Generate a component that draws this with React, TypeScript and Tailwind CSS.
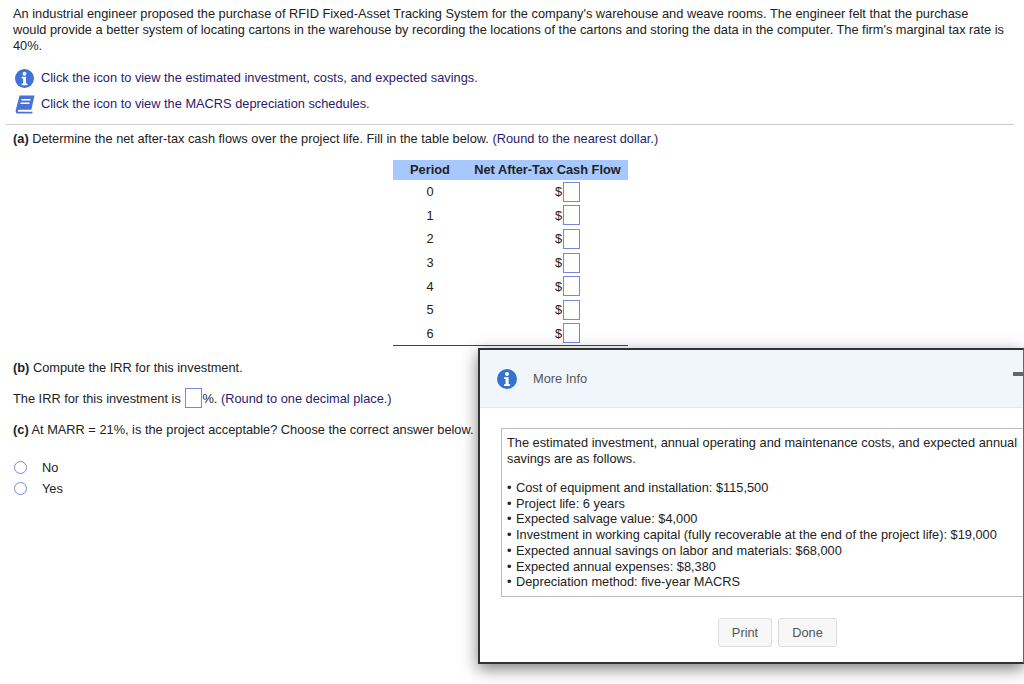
import React from "react";

const Box = ({ cls = "" }: { cls?: string }) => (
  <span className={"inline-block border border-[#7b86d6] bg-white w-[17px] h-[20px] " + cls} />
);

const InfoIcon = ({ size, color }: { size: number; color: string }) => (
  <svg width={size} height={size} viewBox="0 0 20 20" className="shrink-0">
    <circle cx="10" cy="10" r="10" fill={color} />
    <circle cx="10" cy="5" r="2" fill="#fff" />
    <path d="M7 8.2h4.6v7h1.5v1.8H7v-1.8h1.6V10H7z" fill="#fff" />
  </svg>
);

const BookIcon = () => (
  <svg width="20" height="19" viewBox="0 0 22 20" preserveAspectRatio="none" className="shrink-0">
    <path d="M5 0.5h16.5L18 15.5H4.2C3 15.5 2.6 17.6 4 17.6h15.4l-.5 2H3C.8 19.6.4 17.4.9 15.5z" fill="#4a72d6" />
    <path d="M7 5h10M6 8.6h10" stroke="#fff" strokeWidth="1.5" />
  </svg>
);

const rows = [0, 1, 2, 3, 4, 5, 6];
const facts = [
  "Cost of equipment and installation: $115,500",
  "Project life: 6 years",
  "Expected salvage value: $4,000",
  "Investment in working capital (fully recoverable at the end of the project life): $19,000",
  "Expected annual savings on labor and materials: $68,000",
  "Expected annual expenses: $8,380",
  "Depreciation method: five-year MACRS",
];

export default function App() {
  return (
    <div className="relative w-[1024px] h-[684px] overflow-hidden bg-white text-[#222] text-[12.8px] font-['Liberation_Sans',Arial,sans-serif]">
      <div className="px-[13px] pt-[6px]">
        <p className="leading-[16px] whitespace-nowrap">
          An industrial engineer proposed the purchase of RFID Fixed-Asset Tracking System for the company's warehouse and weave rooms. The engineer felt that the purchase
          <br />
          would provide a better system of locating cartons in the warehouse by recording the locations of the cartons and storing the data in the computer. The firm's marginal tax rate is
          <br />
          40%.
        </p>
        <div className="mt-[14px] flex flex-col gap-[6px] text-[#2b1a6e]">
          <div className="flex items-center h-[20px] pl-[2px]">
            <InfoIcon size={19} color="#3f74d6" />
            <span className="ml-[7px]">Click the icon to view the estimated investment, costs, and expected savings.</span>
          </div>
          <div className="flex items-center h-[20px] pl-[2px]">
            <BookIcon />
            <span className="ml-[6px]">Click the icon to view the MACRS depreciation schedules.</span>
          </div>
        </div>
      </div>
      <div className="mt-[10px] border-t border-[#ccc] mr-[10px] ml-[6px]" />
      <p className="mt-[6px] px-[13px] leading-[16px]">
        <b>(a)</b> Determine the net after-tax cash flows over the project life. Fill in the table below. <span className="text-[#2b1a6e]">(Round to the nearest dollar.)</span>
      </p>
      <div className="ml-[393px] mt-[13px] w-[235px] border-b border-[#444]">
        <div className="flex h-[20px] items-center bg-[#a6c8ff] font-bold">
          <span className="w-[74px] text-center">Period</span>
          <span className="flex-1 text-center">Net After-Tax Cash Flow</span>
        </div>
        <div className="flex flex-col">
          {rows.map((r) => (
            <div key={r} className="flex items-center h-[23.6px]">
              <span className="w-[74px] text-center">{r}</span>
              <span className="w-[96px] text-right pr-[1px]">$</span>
              <Box />
            </div>
          ))}
        </div>
      </div>
      <div className="px-[13px]">
        <p className="mt-[14px] leading-[16px]"><b>(b)</b> Compute the IRR for this investment.</p>
        <p className="mt-[12px] flex items-center h-[20px]">
          <span>The IRR for this investment is&nbsp;</span>
          <Box cls="ml-[1px]" />
          <span>%. <span className="text-[#2b1a6e]">(Round to one decimal place.)</span></span>
        </p>
        <p className="mt-[14px] leading-[16px]"><b>(c)</b> At MARR = 21%, is the project acceptable? Choose the correct answer below.</p>
        <div className="mt-[21px] flex flex-col gap-[5px] pl-[1px]">
          {["No", "Yes"].map((o) => (
            <div key={o} className="flex items-center h-[16px]">
              <span className="w-[13px] h-[13px] rounded-full border-[1.5px] border-[#8088d8] bg-white" />
              <span className="ml-[15px]">{o}</span>
            </div>
          ))}
        </div>
      </div>

      <div className="absolute left-[478px] top-[348px] w-[546px] h-[316px] overflow-hidden bg-white border-2 border-r border-[#333] border-r-[#666] shadow-[0_5px_15px_rgba(0,0,0,0.5)] flex flex-col">
        <div className="relative h-[58px] shrink-0 bg-[#f1f6fd] border-b border-[#dde9f7] flex items-center pl-[17px] text-[#555]">
          <InfoIcon size={20} color="#3673cc" />
          <span className="ml-[16px]">More Info</span>
          <span className="absolute left-[533px] top-[22px] w-[12px] h-[4px] bg-[#666]" />
        </div>
        <div className="mt-[20px] ml-[21px] border border-[#bbb] w-[560px] h-[169px] shrink-0 pl-[5px] pt-[6px] leading-[16px]">
          <p className="w-[520px]">The estimated investment, annual operating and maintenance costs, and expected annual savings are as follows.</p>
          <ul className="mt-[13px] leading-[15.7px]">
            {facts.map((f) => (
              <li key={f} className="flex">
                <span className="w-[9px]">•</span>
                <span>{f}</span>
              </li>
            ))}
          </ul>
        </div>
        <div className="mt-[21px] ml-[238px] flex gap-[6px]">
          <button className="w-[54px] h-[29px] rounded-[3px] border border-[#ddd] bg-[#f7f7f7] text-[#555]">Print</button>
          <button className="w-[59px] h-[29px] rounded-[3px] border border-[#ddd] bg-[#f7f7f7] text-[#555]">Done</button>
        </div>
      </div>
    </div>
  );
}
